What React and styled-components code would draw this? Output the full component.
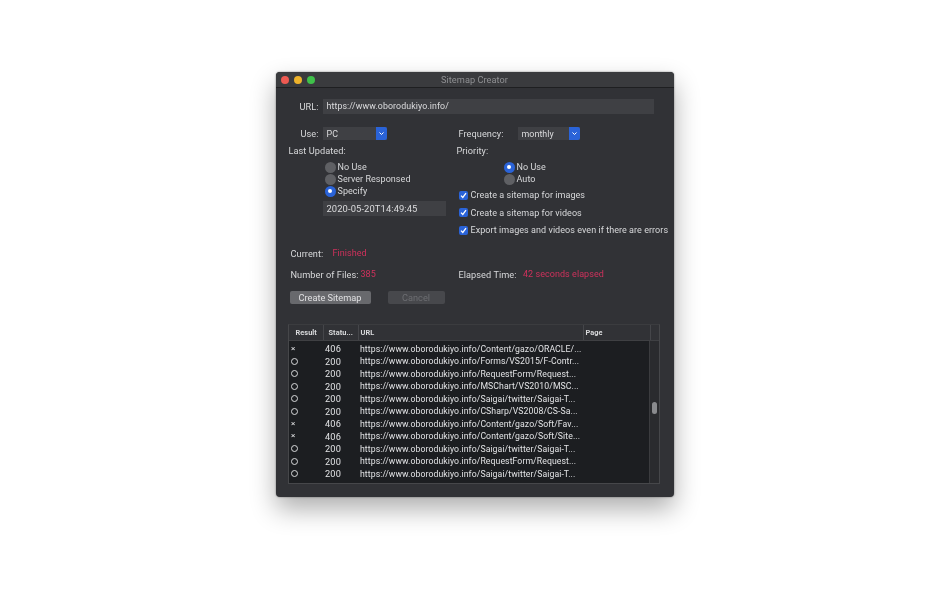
import React from "react";
import styled, { createGlobalStyle } from "styled-components";

const GlobalStyle = createGlobalStyle`
    html, body {
        margin: 0;
        padding: 0;
        background: #ffffff;
    }
    body {
        font-family: Roboto, "Liberation Sans", sans-serif;
    }
`;

const Page = styled.div`
    width: 950px;
    height: 594px;
    overflow: hidden;
    padding-top: 72px;
    box-sizing: border-box;
    display: flex;
    justify-content: center;
    padding-right: 1px;
`;

const Window = styled.div`
    width: 398px;
    height: 425px;
    box-sizing: border-box;
    background: #313236;
    border-radius: 4px;
    box-shadow: 0 12px 26px rgba(0, 0, 0, 0.32), 0 0 2px rgba(0, 0, 0, 0.5);
    display: flex;
    flex-direction: column;
    font-size: 9.2px;
    letter-spacing: 0.05px;
    color: #d8d9db;
    filter: blur(0.3px);
`;

const TitleBar = styled.div`
    height: 15px;
    flex: none;
    background: #3a3b3e;
    border-bottom: 1px solid #1e1f21;
    border-radius: 4px 4px 0 0;
    display: flex;
    align-items: center;
    position: relative;
    padding-left: 5px;
    gap: 5px;
`;

const Light = styled.span`
    width: 8px;
    height: 8px;
    border-radius: 50%;
    background: ${(p) => p.$color};
`;

const Title = styled.div`
    position: absolute;
    left: 0;
    right: 0;
    text-align: center;
    color: #8f9093;
    font-size: 9.2px;
`;

const Body = styled.div`
    flex: 1;
    display: flex;
    flex-direction: column;
    padding: 10px 13px 12px 12px;
`;

const UrlRow = styled.div`
    display: flex;
    align-items: center;
    height: 16px;
    margin-bottom: 12px;
`;

const RightLabel = styled.div`
    width: 31px;
    margin-right: 4px;
    text-align: right;
    flex: none;
`;

const TextBox = styled.div`
    width: ${(p) => p.$width}px;
    height: 15px;
    background: #3f4044;
    box-sizing: border-box;
    padding-left: 4px;
    line-height: 15px;
    color: #dcdcde;
    font-size: 9.4px;
    letter-spacing: 0.1px;
    margin-left: ${(p) => p.$left || 0}px;
`;

const UrlBox = styled(TextBox)`
    font-size: 8.8px;
`;

const Columns = styled.div`
    display: flex;
    height: 112px;
`;

const LeftColumn = styled.div`
    width: 168px;
    margin-right: 1px;
    flex: none;
    display: flex;
    flex-direction: column;
    & > * {
        flex: none;
    }
`;

const RightColumn = styled.div`
    flex: 1;
    display: flex;
    flex-direction: column;
    & > * {
        flex: none;
    }
`;

const SelectRow = styled.div`
    display: flex;
    align-items: center;
    height: 15px;
    margin-bottom: 3px;
`;

const RightLabelWide = styled.div`
    width: 59px;
    padding-left: 2px;
    flex: none;
`;

const Select = styled.div`
    width: ${(p) => p.$width}px;
    height: 13px;
    background: #3f4044;
    display: flex;
    align-items: center;
    justify-content: space-between;
    box-sizing: border-box;
    padding-left: 4px;
    color: #dcdcde;
    font-size: 8.9px;
`;

const SelectText = styled.span`
    padding-top: 1px;
`;

const SelectArrow = styled.span`
    width: 11px;
    height: 13px;
    background: #2a63d8;
    border-radius: 0 2px 2px 0;
    display: flex;
    align-items: center;
    justify-content: center;
`;

const GroupLabel = styled.div`
    height: 13px;
    line-height: 13px;
    margin-left: ${(p) => p.$left || 0}px;
    margin-bottom: 4px;
`;

const RadioGroup = styled.div`
    display: flex;
    flex-direction: column;
    margin-left: ${(p) => p.$left}px;
    margin-bottom: ${(p) => p.$bottom || 0}px;
    font-size: 9px;
`;

const RadioRow = styled.div`
    display: flex;
    align-items: center;
    height: 12px;
    gap: 2px;
`;

const Radio = styled.span`
    width: 11px;
    height: 11px;
    border-radius: 50%;
    background: ${(p) => (p.$on ? "#2a63d8" : "#5f6064")};
    display: flex;
    align-items: center;
    justify-content: center;
    &::after {
        content: "";
        display: ${(p) => (p.$on ? "block" : "none")};
        width: 4px;
        height: 4px;
        border-radius: 50%;
        background: #ffffff;
    }
`;

const DateBox = styled(TextBox)`
    margin-top: 4px;
`;

const CheckRow = styled.div`
    display: flex;
    align-items: center;
    height: 12px;
    gap: 3px;
    margin-left: 2px;
    margin-bottom: 5.5px;
    white-space: nowrap;
    font-size: 9px;
`;

const CheckBox = styled.span`
    width: 9px;
    height: 9px;
    border-radius: 2px;
    background: #2a63d8;
    display: flex;
    align-items: center;
    justify-content: center;
    flex: none;
`;

const StatusRow = styled.div`
    display: flex;
    height: 13px;
    line-height: 13px;
    margin-top: ${(p) => p.$top}px;
    white-space: nowrap;
`;

const StatusLeft = styled.div`
    width: 169px;
    padding-left: 3px;
    box-sizing: border-box;
    flex: none;
    display: flex;
`;

const StatusRight = styled.div`
    display: flex;
    padding-left: 2px;
`;

const Key = styled.span`
    width: ${(p) => p.$width}px;
    flex: none;
`;

const Alert = styled.span`
    color: #cf315c;
    font-size: 9px;
`;

const Buttons = styled.div`
    display: flex;
    margin-top: 10px;
    margin-left: 2px;
    gap: 17px;
`;

const Button = styled.button`
    width: ${(p) => p.$width}px;
    height: 13px;
    padding: 0;
    border: none;
    border-radius: 2px;
    font-family: inherit;
    font-size: 9.2px;
    line-height: 13px;
    background: ${(p) => (p.disabled ? "#47484c" : "#68696d")};
    color: ${(p) => (p.disabled ? "#6d6e72" : "#e0e0e2")};
`;

const Table = styled.div`
    width: 372px;
    height: 160px;
    box-sizing: border-box;
    margin-top: 20px;
    border: 1px solid #46474a;
    border-top-color: #3b3c3f;
    display: flex;
    flex-direction: column;
    background: #1c1e21;
`;

const HeaderRow = styled.div`
    height: 15px;
    flex: none;
    display: flex;
    background: #313236;
    border-bottom: 1px solid #3f4043;
    font-size: 7.4px;
    font-weight: 700;
    line-height: 15px;
    color: #d8d9db;
`;

const HeaderCell = styled.div`
    width: ${(p) => p.$width}px;
    box-sizing: border-box;
    padding-left: ${(p) => p.$pad}px;
    border-right: 1px solid ${(p) => (p.$plain ? "transparent" : "#45464a")};
    white-space: nowrap;
    overflow: hidden;
    flex: none;
`;

const TableBody = styled.div`
    flex: 1;
    display: flex;
    min-height: 0;
`;

const Rows = styled.div`
    flex: 1;
    padding-top: 1.5px;
    display: flex;
    flex-direction: column;
`;

const Row = styled.div`
    height: 12.5px;
    flex: none;
    display: flex;
    align-items: center;
    font-size: 8.7px;
    letter-spacing: 0.08px;
    color: #e2e3e5;
`;

const ResultCell = styled.div`
    width: 36.5px;
    flex: none;
    padding-left: 2px;
    box-sizing: border-box;
    display: flex;
    align-items: center;
`;

const CircleMark = styled.span`
    width: 5px;
    height: 5px;
    border: 1px solid #d8d9db;
    border-radius: 50%;
`;

const CrossMark = styled.span`
    font-size: 8px;
    line-height: 10px;
    padding-left: 0.5px;
`;

const CodeCell = styled.div`
    width: 35px;
    flex: none;
    font-size: 9.2px;
    letter-spacing: 0.2px;
`;

const UrlCell = styled.div`
    white-space: nowrap;
`;

const ScrollTrack = styled.div`
    width: 10px;
    flex: none;
    background: #2a2b2e;
    border-left: 1px solid #3b3c3f;
    box-sizing: border-box;
    position: relative;
`;

const ScrollThumb = styled.div`
    position: absolute;
    left: 2px;
    top: 61px;
    width: 5px;
    height: 12px;
    border-radius: 3px;
    background: #8a8b8e;
`;

const rows = [
    [false, "406", "https://www.oborodukiyo.info/Content/gazo/ORACLE/..."],
    [true, "200", "https://www.oborodukiyo.info/Forms/VS2015/F-Contr..."],
    [true, "200", "https://www.oborodukiyo.info/RequestForm/Request..."],
    [true, "200", "https://www.oborodukiyo.info/MSChart/VS2010/MSC..."],
    [true, "200", "https://www.oborodukiyo.info/Saigai/twitter/Saigai-T..."],
    [true, "200", "https://www.oborodukiyo.info/CSharp/VS2008/CS-Sa..."],
    [false, "406", "https://www.oborodukiyo.info/Content/gazo/Soft/Fav..."],
    [false, "406", "https://www.oborodukiyo.info/Content/gazo/Soft/Site..."],
    [true, "200", "https://www.oborodukiyo.info/Saigai/twitter/Saigai-T..."],
    [true, "200", "https://www.oborodukiyo.info/RequestForm/Request..."],
    [true, "200", "https://www.oborodukiyo.info/Saigai/twitter/Saigai-T..."],
];

const Chevron = () => (
    <svg width="7" height="5" viewBox="0 0 7 5">
        <path d="M1.5 1.5 L3.5 3.5 L5.5 1.5" fill="none" stroke="#ffffff" strokeWidth="1" />
    </svg>
);

const Tick = () => (
    <svg width="9" height="9" viewBox="0 0 9 9">
        <path d="M2 4.6 L3.8 6.5 L7 2.2" fill="none" stroke="#ffffff" strokeWidth="1.3" />
    </svg>
);

const App = () => {
    return (
        <Page>
            <GlobalStyle />
            <Window>
                <TitleBar>
                    <Light $color="#ee5a52" />
                    <Light $color="#eeb32b" />
                    <Light $color="#3fc14a" />
                    <Title>Sitemap Creator</Title>
                </TitleBar>
                <Body>
                    <UrlRow>
                        <RightLabel>URL:</RightLabel>
                        <UrlBox $width={331}>https://www.oborodukiyo.info/</UrlBox>
                    </UrlRow>
                    <Columns>
                        <LeftColumn>
                            <SelectRow>
                                <RightLabel>Use:</RightLabel>
                                <Select $width={64}>
                                    <SelectText>PC</SelectText>
                                    <SelectArrow><Chevron /></SelectArrow>
                                </Select>
                            </SelectRow>
                            <GroupLabel $left={1}>Last Updated:</GroupLabel>
                            <RadioGroup $left={37}>
                                <RadioRow><Radio />No Use</RadioRow>
                                <RadioRow><Radio />Server Responsed</RadioRow>
                                <RadioRow><Radio $on />Specify</RadioRow>
                            </RadioGroup>
                            <DateBox $width={123} $left={35}>2020-05-20T14:49:45</DateBox>
                        </LeftColumn>
                        <RightColumn>
                            <SelectRow>
                                <RightLabelWide>Frequency:</RightLabelWide>
                                <Select $width={62}>
                                    <SelectText>monthly</SelectText>
                                    <SelectArrow><Chevron /></SelectArrow>
                                </Select>
                            </SelectRow>
                            <GroupLabel>Priority:</GroupLabel>
                            <RadioGroup $left={47} $bottom={4}>
                                <RadioRow><Radio $on />No Use</RadioRow>
                                <RadioRow><Radio />Auto</RadioRow>
                            </RadioGroup>
                            <CheckRow><CheckBox><Tick /></CheckBox>Create a sitemap for images</CheckRow>
                            <CheckRow><CheckBox><Tick /></CheckBox>Create a sitemap for videos</CheckRow>
                            <CheckRow><CheckBox><Tick /></CheckBox>Export images and videos even if there are errors</CheckRow>
                        </RightColumn>
                    </Columns>
                    <StatusRow $top={9}>
                        <StatusLeft>
                            <Key $width={42}>Current:</Key>
                            <Alert>Finished</Alert>
                        </StatusLeft>
                    </StatusRow>
                    <StatusRow $top={8}>
                        <StatusLeft>
                            <Key $width={70}>Number of Files:</Key>
                            <Alert>385</Alert>
                        </StatusLeft>
                        <StatusRight>
                            <Key $width={64.5}>Elapsed Time:</Key>
                            <Alert>42 seconds elapsed</Alert>
                        </StatusRight>
                    </StatusRow>
                    <Buttons>
                        <Button $width={81}>Create Sitemap</Button>
                        <Button $width={57} disabled>Cancel</Button>
                    </Buttons>
                    <Table>
                        <HeaderRow>
                            <HeaderCell $width={35} $pad={7}>Result</HeaderCell>
                            <HeaderCell $width={35} $pad={5}>Statu...</HeaderCell>
                            <HeaderCell $width={225} $pad={2}>URL</HeaderCell>
                            <HeaderCell $width={67} $pad={2}>Page</HeaderCell>
                            <HeaderCell $width={9} $pad={0} $plain />
                        </HeaderRow>
                        <TableBody>
                            <Rows>
                                {rows.map(([ok, code, url], i) => (
                                    <Row key={i}>
                                        <ResultCell>{ok ? <CircleMark /> : <CrossMark>×</CrossMark>}</ResultCell>
                                        <CodeCell>{code}</CodeCell>
                                        <UrlCell>{url}</UrlCell>
                                    </Row>
                                ))}
                            </Rows>
                            <ScrollTrack><ScrollThumb /></ScrollTrack>
                        </TableBody>
                    </Table>
                </Body>
            </Window>
        </Page>
    );
};

export default App;
